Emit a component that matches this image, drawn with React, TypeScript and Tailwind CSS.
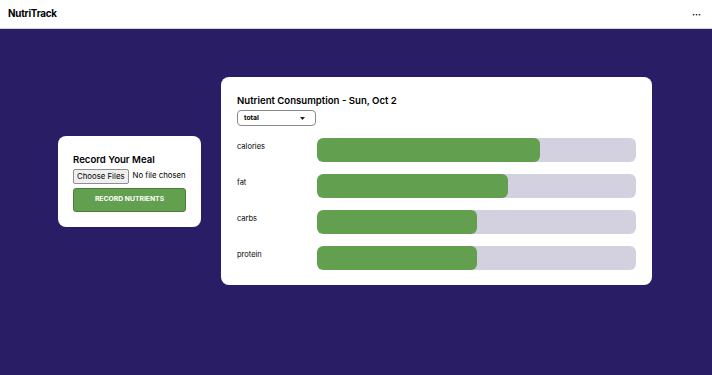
import React from 'react';

const NUTRIENTS = [
  { name: 'calories', pct: 70 },
  { name: 'fat', pct: 60 },
  { name: 'carbs', pct: 50 },
  { name: 'protein', pct: 50 },
];

export default function App() {
  return (
    <div className="flex min-h-screen flex-col bg-[#291d66]" style={{ fontFamily: 'Inter, "Liberation Sans", sans-serif' }}>
      {/* HEADER */}
      <header className="flex h-[29px] items-center justify-between border-b border-[#d4d4d4] bg-white pl-[8px] pr-[11px]">
        <span className="text-[9.8px] font-bold tracking-[-0.2px] text-black">NutriTrack</span>
        <span className="text-[9px] font-bold leading-none text-black">···</span>
      </header>

      {/* MAIN */}
      <main className="flex items-center justify-center gap-[20px] pr-[2px] pt-[48px]">
        {/* record card */}
        <div className="flex w-[143px] flex-col rounded-[8px] bg-white pb-[15px] pl-[15px] pr-[15px] pt-[17px]">
          <h2 className="text-[9.6px] font-semibold leading-[13px] text-black">Record Your Meal</h2>
          <div className="mt-[3px] flex items-center gap-[4px] whitespace-nowrap">
            <span className="rounded-[2px] border border-[#8f8f8f] bg-[#efefef] px-[3px] py-[1px] text-[7.8px] leading-[11px] text-black">Choose Files</span>
            <span className="text-[7.8px] text-black">No file chosen</span>
          </div>
          <button className="mt-[4px] h-[24px] w-full rounded-[3px] border border-[#4a7f3b] bg-[#62a04f] text-[6.8px] font-bold uppercase text-white">
            Record Nutrients
          </button>
        </div>

        {/* consumption card */}
        <div className="flex w-[431px] flex-col rounded-[8px] bg-white pb-[15px] pl-[16px] pr-[16px] pt-[17px]">
          <h2 className="text-[9.6px] font-semibold leading-[13px] text-black">Nutrient Consumption - Sun, Oct 2</h2>
          <div className="mt-[3px] flex h-[16px] w-[79px] items-center justify-between rounded-[4px] border border-[#8a8a8a] pl-[6px] pr-[10px]">
            <span className="text-[6.8px] font-bold text-black">total</span>
            <svg width="5" height="3" viewBox="0 0 5 3"><path d="M0 0h5L2.5 3z" fill="#222" /></svg>
          </div>
          <div className="mt-[12px] flex flex-col gap-[12px]">
            {NUTRIENTS.map((n) => (
              <div key={n.name} className="flex items-center">
                <span className="mb-[6px] w-[80px] text-[7.5px] text-black">{n.name}</span>
                <div className="h-[24px] flex-1 overflow-hidden rounded-[6px] bg-[#d3d1df]">
                  <div className="h-full rounded-[6px] bg-[#62a04f]" style={{ width: `${n.pct}%` }} />
                </div>
              </div>
            ))}
          </div>
        </div>
      </main>
    </div>
  );
}
